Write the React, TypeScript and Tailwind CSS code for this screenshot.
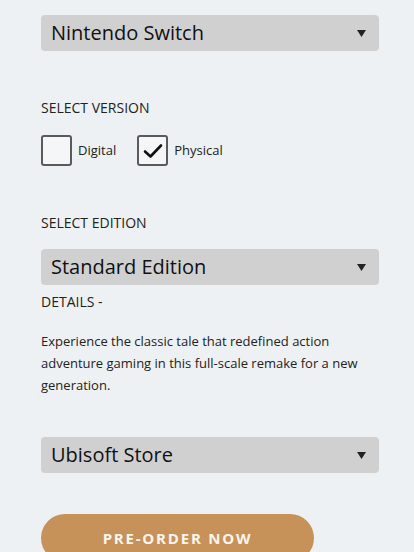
import { useState } from "react";

function Select({ value }: { value: string }) {
  return (
    <div className="flex h-[36px] w-full items-center justify-between rounded-[4px] bg-[#d0d0d0] pl-[10px] pr-[13px]">
      <span className="text-[20px] leading-none text-[#111]">{value}</span>
      <svg width="9" height="7" viewBox="0 0 9 7">
        <path d="M0 0 H9 L4.5 7 Z" fill="#222" />
      </svg>
    </div>
  );
}

function Checkbox({
  label,
  checked,
  onToggle,
}: {
  label: string;
  checked: boolean;
  onToggle: () => void;
}) {
  return (
    <button onClick={onToggle} className="flex items-center gap-[6px]">
      <span className="flex h-[31px] w-[31px] items-center justify-center rounded-[3px] border-2 border-[#5a5a5a] bg-[#f4f6f7]">
        {checked && (
          <svg width="20" height="16" viewBox="0 0 20 16">
            <path
              d="M2 8.5 L7.5 13.5 L18 2.5"
              fill="none"
              stroke="#111"
              strokeWidth="2.6"
              strokeLinecap="round"
              strokeLinejoin="round"
            />
          </svg>
        )}
      </span>
      <span className="text-[13px] text-[#222]">{label}</span>
    </button>
  );
}

export default function App() {
  const [version, setVersion] = useState("Physical");

  return (
    <div className="min-h-[552px] w-full overflow-hidden bg-[#eef1f3] font-['Open_Sans','Noto_Sans',sans-serif]">
      <div className="ml-[41px] w-[338px] pt-[15px]">
        <Select value="Nintendo Switch" />

        <div className="mt-[47px] text-[14px] leading-[20px] text-[#222]">SELECT VERSION</div>
        <div className="mt-[17px] flex gap-[21px]">
          <Checkbox label="Digital" checked={version === "Digital"} onToggle={() => setVersion("Digital")} />
          <Checkbox label="Physical" checked={version === "Physical"} onToggle={() => setVersion("Physical")} />
        </div>

        <div className="mt-[47px] text-[14px] leading-[20px] text-[#222]">SELECT EDITION</div>
        <div className="mt-[16px]">
          <Select value="Standard Edition" />
        </div>
        <div className="mt-[7px] text-[14px] leading-[20px] text-[#222]">DETAILS -</div>

        <p className="mt-[18px] pr-[10px] text-[13px] leading-[22px] text-[#222]">
          Experience the classic tale that redefined action adventure gaming in this full-scale remake for a new
          generation.
        </p>

        <div className="mt-[41px]">
          <Select value="Ubisoft Store" />
        </div>

        <button className="mt-[41px] flex h-[48px] w-[273px] items-center justify-center rounded-full bg-[#c6925a] text-[15px] font-bold tracking-[0.12em] text-[#fbf5ee]">
          PRE-ORDER NOW
        </button>
      </div>
    </div>
  );
}
